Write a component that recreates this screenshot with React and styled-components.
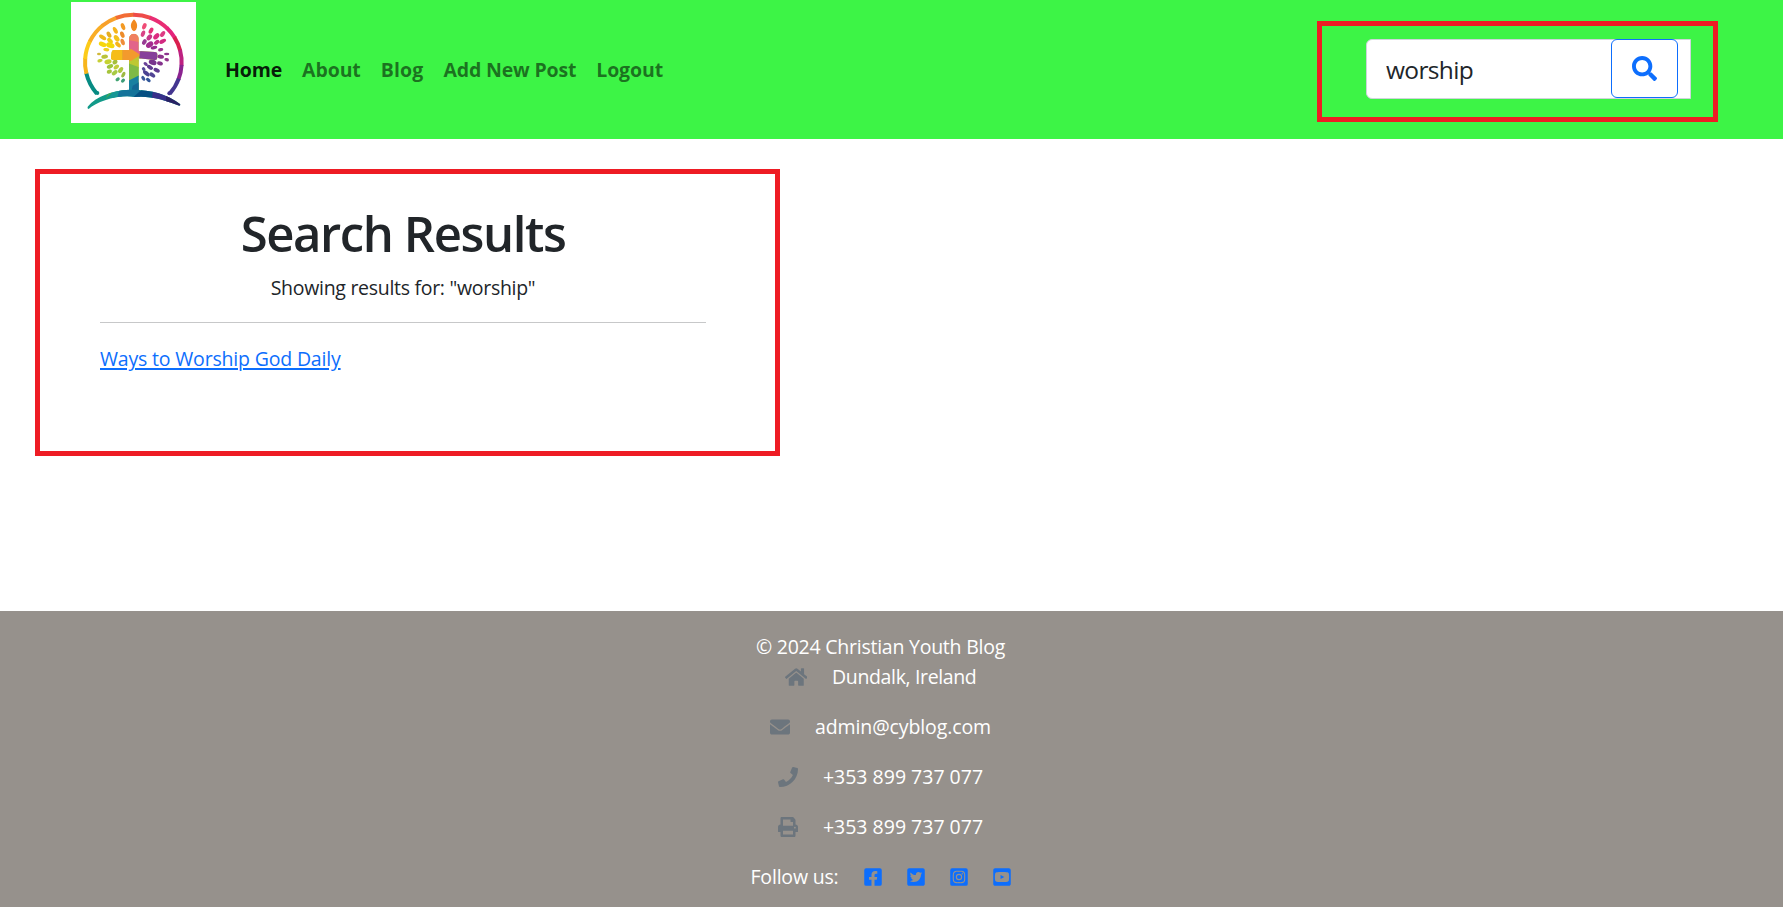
import React from 'react';
import styled, { createGlobalStyle } from 'styled-components';
import {
  FaEnvelope,
  FaFacebookSquare,
  FaHome,
  FaInstagramSquare,
  FaPhone,
  FaPrint,
  FaSearch,
  FaTwitterSquare,
  FaYoutubeSquare,
} from 'react-icons/fa';

const GlobalStyle = createGlobalStyle`
  *, *::before, *::after { box-sizing: border-box; }
  body {
    margin: 0;
    background: #fff;
    color: #212529;
    font-family: 'Segoe UI', 'Open Sans', 'Noto Sans', sans-serif;
    font-size: 19.5px;
    line-height: 30px;
  }
`;

const Page = styled.div`
  display: flex;
  flex-direction: column;
  min-height: 907px;
`;

const Navbar = styled.header`
  display: flex;
  align-items: flex-start;
  height: 139px;
  padding: 2px 65px 0 71px;
  background: #3df446;
`;

const Logo = styled.svg`
  display: block;
  flex: none;
  width: 125px;
  height: 121px;
  background: #fff;
`;

const NavLinks = styled.nav`
  display: flex;
  flex: 1;
  gap: 20px;
  margin: 53px 0 0 29px;
  font-size: 19.5px;
`;

const NavLink = styled.a`
  color: ${(p) => (p.$active ? 'rgba(0, 0, 0, 0.9)' : 'rgba(0, 0, 0, 0.55)')};
  font-weight: 700;
  letter-spacing: ${(p) => p.$track || 0}px;
  text-decoration: none;
`;

const Highlight = styled.div`
  border: 5px solid #ee1c24;
`;

const SearchHighlight = styled(Highlight)`
  width: 401px;
  height: 101px;
  margin-top: 19px;
  padding: 13px 22px 0 44px;
`;

const SearchForm = styled.form`
  display: flex;
  justify-content: space-between;
  width: 325px;
  height: 60px;
  padding-right: 12px;
  border: 1px solid #ced4da;
  border-radius: 6px 0 0 6px;
  background: #fff;
`;

const SearchInput = styled.input`
  width: 230px;
  padding: 2px 0 0 19px;
  border: 0;
  outline: 0;
  background: transparent;
  color: #212529;
  font: inherit;
  font-size: 24.5px;
  letter-spacing: -0.65px;
`;

const SearchButton = styled.button`
  display: flex;
  align-items: center;
  justify-content: center;
  width: 67px;
  height: 59px;
  margin-top: -1px;
  padding: 0;
  border: 1px solid #0d6efd;
  border-radius: 6px;
  background: #fff;
  color: #0d6efd;
  font-size: 25px;
`;

const Main = styled.main`
  flex: 1;
  padding: 30px 35px 0;
`;

const ResultsPanel = styled(Highlight)`
  width: 745px;
  height: 287px;
  padding: 29px 69px 0 60px;
`;

const Title = styled.h1`
  margin: 0 0 10px;
  font-size: 49px;
  font-weight: 600;
  line-height: 60px;
  letter-spacing: -1.4px;
  text-align: center;
`;

const Summary = styled.p`
  margin: 0 0 19px;
  letter-spacing: -0.29px;
  text-align: center;
`;

const Divider = styled.hr`
  margin: 0 0 21px;
  border: 0;
  border-top: 1px solid #c7c8c9;
`;

const ResultLink = styled.a`
  color: #0d6efd;
  letter-spacing: -0.18px;
  text-decoration: underline;
  text-decoration-thickness: 2px;
  text-underline-offset: 2px;
  text-decoration-skip-ink: auto;
`;

const Footer = styled.footer`
  display: flex;
  flex-direction: column;
  align-items: center;
  height: 296px;
  padding: 21px 22px 0 0;
  background: #96918c;
  color: #fff;
`;

const FooterRow = styled.div`
  display: flex;
  align-items: center;
  gap: 25px;
  height: 30px;
  margin-bottom: ${(p) => (p.$tight ? 0 : 20)}px;
  letter-spacing: ${(p) => p.$track || 0}px;
`;

const ContactIcon = styled.span`
  display: flex;
  color: #6c757d;
  svg {
    width: ${(p) => (p.$wide ? 22.5 : 20)}px;
    height: 20px;
  }
`;

const SocialLink = styled.a`
  display: flex;
  color: #0d6efd;
  svg {
    width: 18px;
    height: 20px;
  }
`;

/* Ring around the tree, sampled clockwise in short coloured arcs (degrees). */
const ring = [
  [139, 167, '#078b83'],
  [166, 185, '#f7b51c'],
  [184, 207, '#fccb19'],
  [206, 231, '#f9ad26'],
  [230, 250, '#f7a02b'],
  [249, 271, '#f26c35'],
  [270, 291, '#ee4b49'],
  [290, 315, '#e92d74'],
  [314, 329, '#e5247b'],
  [328, 346, '#d91f4e'],
  [345, 364, '#bd2181'],
  [363, 381, '#8b2390'],
  [380, 401, '#443690'],
];

const point = (deg) => {
  const a = (deg * Math.PI) / 180;
  return `${220 + 145 * Math.cos(a)} ${187 + 143 * Math.sin(a)}`;
};

/* Leaves: x, y, long radius, short radius, rotation, colour. */
const leaves = [
  [189, 80, 11, 6, 70, '#f39a24'],
  [166, 91, 11, 6, 62, '#f5b41c'],
  [147, 104, 10, 6, 60, '#e5ad20'],
  [128, 112, 12, 6, 32, '#efb81a'],
  [187, 104, 10, 6, 68, '#ed8b28'],
  [170, 115, 11, 7, 55, '#f4c21c'],
  [150, 122, 10, 6, 42, '#f2cd13'],
  [128, 133, 12, 7, 20, '#f6d60c'],
  [151, 136, 13, 8, 18, '#f3d80c'],
  [174, 134, 10, 6, 44, '#f5b41c'],
  [188, 126, 10, 6, 72, '#ef8c3a'],
  [139, 149, 9, 5, 8, '#efcf20'],
  [117, 162, 6, 4, 0, '#d1b83a'],
  [134, 170, 10, 6, -8, '#b9c33a'],
  [120, 182, 8, 5, -12, '#c6cf35'],
  [144, 185, 11, 7, -15, '#c5d231'],
  [165, 186, 8, 7, -38, '#a5bf3c'],
  [150, 199, 10, 6, -24, '#9ec43c'],
  [169, 201, 9, 6, -40, '#c1ce3b'],
  [148, 215, 8, 6, -18, '#a6c43b'],
  [164, 218, 10, 6, -40, '#a6ca43'],
  [182, 210, 10, 6, -55, '#afc83e'],
  [190, 224, 9, 5, -62, '#9dba42'],
  [173, 238, 7, 5, -35, '#43a574'],
  [189, 242, 7, 5, -45, '#3c9c78'],
  [253, 79, 10, 6, -68, '#ef4c76'],
  [273, 92, 10, 6, -62, '#e62e76'],
  [249, 101, 10, 6, -70, '#d94386'],
  [268, 112, 10, 7, -52, '#c63689'],
  [289, 109, 11, 7, -46, '#dc2b80'],
  [308, 102, 10, 6, -55, '#dd3b83'],
  [253, 126, 9, 6, -60, '#973b94'],
  [269, 134, 12, 8, -34, '#a32c90'],
  [290, 127, 9, 6, -35, '#bd2e8b'],
  [308, 124, 11, 6, -28, '#d22a81'],
  [282, 143, 10, 5, -14, '#942c8f'],
  [302, 149, 8, 5, -10, '#9b318e'],
  [320, 162, 8, 4, 0, '#8d338e'],
  [302, 170, 10, 6, 8, '#8d338e'],
  [320, 179, 7, 5, 14, '#93338c'],
  [278, 187, 12, 8, 20, '#77348e'],
  [300, 190, 9, 6, 18, '#84328d'],
  [257, 192, 7, 5, 38, '#694299'],
  [270, 202, 10, 6, 32, '#5f3b91'],
  [290, 211, 10, 6, 27, '#5f3b91'],
  [251, 207, 6, 5, 50, '#554b99'],
  [259, 220, 12, 6, 42, '#4b4292'],
  [277, 225, 10, 6, 38, '#514594'],
  [250, 235, 8, 5, 55, '#3b579b'],
  [265, 240, 8, 5, 40, '#31579a'],
];

function TreeLogo() {
  return (
    <Logo viewBox="33 6 375 363" preserveAspectRatio="none" aria-label="Christian Youth Blog">
      <defs>
        <clipPath id="cross">
          <path d="M207 280V180H160q-8 0-7-9l2-15q1-7 9-6h43V116a14 14 0 0 1 29 0v37l49 3q8 1 8 8l-1 10q-1 7-8 6l-48-5V280Z" />
        </clipPath>
        <clipPath id="ground">
          <path d="M86 327q-6-1-3-7C108 289 158 271 208 269Q302 267 360 312q3 4-2 5C313 299 266 286 225 291 177 282 112 304 86 327Z" />
        </clipPath>
      </defs>
      {ring.map(([from, to, color]) => (
        <path
          key={from}
          d={`M${point(from)}A145 143 0 0 1 ${point(to)}`}
          fill="none"
          stroke={color}
          strokeWidth="12"
        />
      ))}
      <circle cx="112" cy="279" r="6" fill="#078b83" />
      <circle cx="328" cy="280" r="6" fill="#443690" />
      {leaves.map(([x, y, rx, ry, turn, color]) => (
        <ellipse key={`${x}-${y}`} cx={x} cy={y} rx={rx} ry={ry} fill={color} transform={`rotate(${turn} ${x} ${y})`} />
      ))}
      <path d="M222 58q-12 12-9 24 2 10 9 12 8-3 9-12 3-12-9-24Z" fill="#f28a20" />
      <g clipPath="url(#cross)">
        <path d="M150 95H300V290H150Z" fill="#b8c936" />
        <path d="M205 95H240V127H205Z" fill="#f08060" />
        <path d="M205 120L240 127V165H205Z" fill="#e2648a" />
        <path d="M150 145H187V184H150Z" fill="#f6bd19" />
        <path d="M187 148H207L215 148 243 166 214 184H187Z" fill="#f39a2d" />
        <path d="M214 182L243 164V205H205V182Z" fill="#bdc833" />
        <path d="M242 145H300V184H236Z" fill="#87409a" />
        <path d="M205 190L237 202V230L205 247Z" fill="#7fba46" />
        <path d="M205 242L238 226V290H205Z" fill="#1880a0" />
        <path d="M218 257L238 246V290H210Z" fill="#126794" />
      </g>
      <g clipPath="url(#ground)">
        <path d="M75 260H375V335H75Z" fill="#129a89" />
        <path d="M137 295L148 276 160 274 143 290Z" fill="#42a852" />
        <path d="M148 292L166 262H202L181 300Z" fill="#169795" />
        <path d="M180 262H240V300H170Z" fill="#14739a" />
        <path d="M220 292L249 265H284L276 302Z" fill="#065083" />
        <path d="M280 262H325L333 325H272Z" fill="#37308a" />
        <path d="M318 285L380 310V335H320Z" fill="#292264" />
      </g>
    </Logo>
  );
}

const contacts = [
  { Icon: FaHome, text: 'Dundalk, Ireland', wide: true, track: -0.36 },
  { Icon: FaEnvelope, text: 'admin@cyblog.com', track: -0.1 },
  { Icon: FaPhone, text: '+353 899 737 077' },
  { Icon: FaPrint, text: '+353 899 737 077' },
];

const socials = [FaFacebookSquare, FaTwitterSquare, FaInstagramSquare, FaYoutubeSquare];

export default function App() {
  return (
    <Page>
      <GlobalStyle />
      <Navbar>
        <TreeLogo />
        <NavLinks>
          <NavLink $active $track={-0.15}>Home</NavLink>
          <NavLink $track={-0.1}>About</NavLink>
          <NavLink $track={0.15}>Blog</NavLink>
          <NavLink $track={-0.17}>Add New Post</NavLink>
          <NavLink $track={-0.1}>Logout</NavLink>
        </NavLinks>
        <SearchHighlight>
          <SearchForm>
            <SearchInput defaultValue="worship" aria-label="Search" />
            <SearchButton type="button" aria-label="Search">
              <FaSearch />
            </SearchButton>
          </SearchForm>
        </SearchHighlight>
      </Navbar>
      <Main>
        <ResultsPanel>
          <Title>Search Results</Title>
          <Summary>Showing results for: "worship"</Summary>
          <Divider />
          <ResultLink href="#">Ways to Worship God Daily</ResultLink>
        </ResultsPanel>
      </Main>
      <Footer>
        <FooterRow $tight $track={-0.24}>© 2024 Christian Youth Blog</FooterRow>
        {contacts.map(({ Icon, text, wide, track }, i) => (
          <FooterRow key={i} $track={track}>
            <ContactIcon $wide={wide}>
              <Icon preserveAspectRatio="none" />
            </ContactIcon>
            {text}
          </FooterRow>
        ))}
        <FooterRow $track={-0.19}>
          Follow us:
          {socials.map((Icon, i) => (
            <SocialLink key={i} href="#">
              <Icon />
            </SocialLink>
          ))}
        </FooterRow>
      </Footer>
    </Page>
  );
}
